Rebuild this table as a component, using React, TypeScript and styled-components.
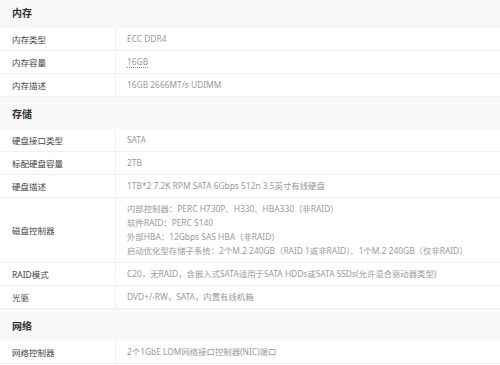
import React from 'react'
import styled, { createGlobalStyle } from 'styled-components'

const GlobalStyle = createGlobalStyle`
  html, body {
    margin: 0;
    padding: 0;
    background: #ffffff;
    overflow: hidden;
  }
  body {
    font-family: "Noto Sans", "Noto Sans CJK SC", sans-serif;
  }
`

type Row = { label: string; value: string[]; tip?: boolean }
type Section = { title: string; rows: Row[] }

const sections: Section[] = [
  {
    title: '内存',
    rows: [
      { label: '内存类型', value: ['ECC DDR4'] },
      { label: '内存容量', value: ['16GB'], tip: true },
      { label: '内存描述', value: ['16GB 2666MT/s UDIMM'] },
    ],
  },
  {
    title: '存储',
    rows: [
      { label: '硬盘接口类型', value: ['SATA'] },
      { label: '标配硬盘容量', value: ['2TB'] },
      { label: '硬盘描述', value: ['1TB*2 7.2K RPM SATA 6Gbps 512n 3.5英寸有线硬盘'] },
      {
        label: '磁盘控制器',
        value: [
          '内部控制器：PERC H730P、H330、HBA330（非RAID）',
          '软件RAID：PERC S140',
          '外部HBA：12Gbps SAS HBA（非RAID）',
          '启动优化型存储子系统：2个M.2 240GB（RAID 1或非RAID）、1个M.2 240GB（仅非RAID）',
        ],
      },
      { label: 'RAID模式', value: ['C20，无RAID，含嵌入式SATA适用于SATA HDDs或SATA SSDs(允许混合驱动器类型)'] },
      { label: '光驱', value: ['DVD+/-RW，SATA，内置有线机箱'] },
    ],
  },
  {
    title: '网络',
    rows: [{ label: '网络控制器', value: ['2个1GbE LOM网络接口控制器(NIC)端口'] }],
  },
]

const App: React.FC = () => {
  return (
    <>
      <GlobalStyle />
      <StyledTable>
        {sections.map((s) => (
          <React.Fragment key={s.title}>
            <StyledHead>{s.title}</StyledHead>
            {s.rows.map((r) => (
              <StyledRow key={r.label}>
                <StyledLabel>{r.label}</StyledLabel>
                <StyledValue>
                  {r.value.map((line, idx) => (
                    <StyledLine key={idx}>
                      {r.tip ? <StyledTip>{line}</StyledTip> : line}
                    </StyledLine>
                  ))}
                </StyledValue>
              </StyledRow>
            ))}
          </React.Fragment>
        ))}
      </StyledTable>
    </>
  )
}

const StyledTable = styled.div`
  width: 500px;
  margin-top: -4px;
  display: flex;
  flex-direction: column;
`
const StyledHead = styled.div`
  height: 32px;
  display: flex;
  align-items: center;
  padding: 0 12px;
  background: #f8f8f8;
  font-size: 10px;
  font-weight: 700;
  color: #333333;
`
const StyledRow = styled.div`
  display: grid;
  grid-template-columns: 116px 1fr;
  border-bottom: 1px solid #f1f1f1;
  background: #ffffff;
`
const StyledLabel = styled.div`
  display: flex;
  align-items: center;
  padding: 0 12px;
  border-right: 1px solid #f1f1f1;
  font-size: 8.5px;
  color: #444444;
`
const StyledValue = styled.div`
  padding: 4px 11px;
  font-size: 8.4px;
  color: #999999;
`
const StyledLine = styled.div`
  line-height: 14px;
  white-space: nowrap;
`
const StyledTip = styled.span`
  border-bottom: 1px dotted #6f8fc0;
`

export default App
